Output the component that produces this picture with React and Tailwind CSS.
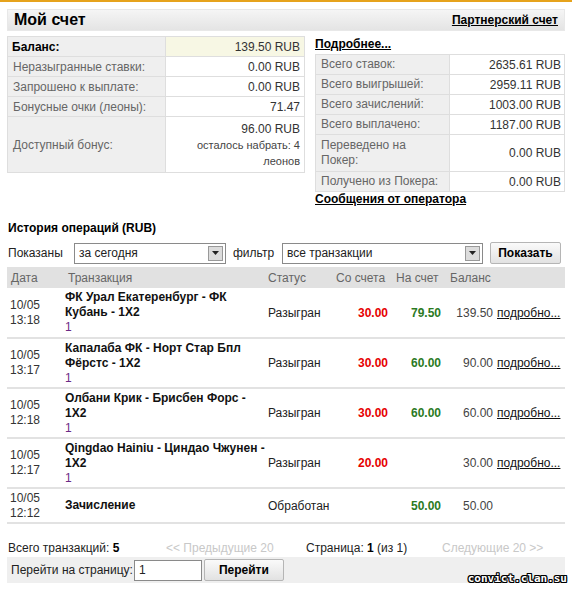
const summary = [
  { label: "Неразыгранные ставки:", value: "0.00 RUB" },
  { label: "Запрошено к выплате:", value: "0.00 RUB" },
  { label: "Бонусные очки (леоны):", value: "71.47" },
];

const totals = [
  { label: "Всего ставок:", value: "2635.61 RUB" },
  { label: "Всего выигрышей:", value: "2959.11 RUB" },
  { label: "Всего зачислений:", value: "1003.00 RUB" },
  { label: "Всего выплачено:", value: "1187.00 RUB" },
  { label: "Переведено на Покер:", value: "0.00 RUB", tall: true },
  { label: "Получено из Покера:", value: "0.00 RUB" },
];

const rows = [
  { date: "10/05", time: "13:18", name: ["ФК Урал Екатеренбург - ФК", "Кубань - 1X2"], sub: "1", status: "Разыгран", out: "30.00", in: "79.50", bal: "139.50", link: true },
  { date: "10/05", time: "13:17", name: ["Капалаба ФК - Норт Стар Бпл", "Фёрстс - 1X2"], sub: "1", status: "Разыгран", out: "30.00", in: "60.00", bal: "90.00", link: true },
  { date: "10/05", time: "12:18", name: ["Олбани Крик - Брисбен Форс -", "1X2"], sub: "1", status: "Разыгран", out: "30.00", in: "60.00", bal: "60.00", link: true },
  { date: "10/05", time: "12:17", name: ["Qingdao Hainiu - Циндао Чжунен -", "1X2"], sub: "1", status: "Разыгран", out: "20.00", in: "", bal: "30.00", link: true },
  { date: "10/05", time: "12:12", name: ["Зачисление"], sub: "", status: "Обработан", out: "", in: "50.00", bal: "50.00", link: false },
];

const SelectBox = ({ value, width }) => (
  <div className={`${width} shrink-0 h-[21px] flex items-center justify-between bg-white border border-[#8a8a8a] pl-[4px] pr-[2px]`}>
    <span>{value}</span>
    <span className="w-[15px] h-[15px] bg-[#dcdcdc] border border-[#999] flex items-center justify-center">
      <svg width="7" height="4" viewBox="0 0 7 4"><path d="M0 0h7L3.5 4z" fill="#222" /></svg>
    </span>
  </div>
);

const App = () => {
  return (
    <div className="w-[572px] h-[591px] bg-white text-[12px] text-[#333] font-['Liberation_Sans',Arial,sans-serif] border-t-2 border-[#e6a31c] relative overflow-hidden">
      <div className="px-[7px] pt-[7px]">
        {/* header */}
        <div className="h-[22px] flex items-center justify-between px-[6px] bg-gradient-to-b from-[#f5f5f5] to-[#e4e4e4] border border-[#e8e8e8]">
          <span className="text-[16px] font-bold text-black">Мой счет</span>
          <a className="font-bold underline text-black">Партнерский счет</a>
        </div>

        <div className="flex gap-[10px] mt-[5px]">
          {/* left summary */}
          <table className="w-[298px] border-collapse self-start">
            <tbody>
              <tr className="h-[20px]">
                <td className="w-[158px] bg-[#efefef] border border-[#dedede] px-[4px] font-bold text-black">Баланс:</td>
                <td className="bg-[#f7f7e4] border border-[#dedede] px-[4px] text-right">139.50 RUB</td>
              </tr>
              {summary.map((r) => (
                <tr key={r.label} className="h-[20px]">
                  <td className="bg-[#efefef] border border-[#dedede] px-[5px] text-[#666]">{r.label}</td>
                  <td className="bg-white border border-[#dedede] px-[4px] text-right">{r.value}</td>
                </tr>
              ))}
              <tr className="h-[56px]">
                <td className="bg-[#efefef] border border-[#dedede] px-[5px] text-[#666]">Доступный бонус:</td>
                <td className="bg-white border border-[#dedede] px-[4px] text-right leading-[16px]">
                  <div>96.00 RUB</div>
                  <div className="text-[11px] text-[#444]">осталось набрать: 4 леонов</div>
                </td>
              </tr>
            </tbody>
          </table>

          {/* right totals */}
          <div className="w-[250px]">
            <a className="block font-bold underline text-black leading-[15px] mt-[1px] mb-[2px]">Подробнее...</a>
            <table className="w-full border-collapse">
              <tbody>
                {totals.map((r) => (
                  <tr key={r.label} className={r.tall ? "h-[37px]" : "h-[20px]"}>
                    <td className="w-[134px] bg-[#efefef] border border-[#dedede] px-[5px] text-[#666] leading-[15px]">{r.label}</td>
                    <td className="bg-white border border-[#dedede] px-[3px] text-right">{r.value}</td>
                  </tr>
                ))}
              </tbody>
            </table>
            <a className="block font-bold underline text-black leading-[14px]">Сообщения от оператора</a>
          </div>
        </div>

        <div className="font-bold text-black mt-[13px] pl-[1px]">История операций (RUB)</div>

        {/* filters */}
        <div className="flex items-center mt-[5px] pl-[1px] text-[#222]">
          <span className="w-[66px] shrink-0">Показаны</span>
          <SelectBox value="за сегодня" width="w-[152px]" />
          <span className="w-[56px] shrink-0 pl-[7px]">фильтр</span>
          <SelectBox value="все транзакции" width="w-[201px]" />
          <button className="ml-[7px] shrink-0 w-[71px] h-[22px] bg-gradient-to-b from-[#fafafa] to-[#e2e2e2] border border-[#b5b5b5] rounded-[2px] font-bold text-black">Показать</button>
        </div>

        {/* transactions */}
        <table className="w-[558px] border-collapse mt-[3px] table-fixed">
          <colgroup>
            <col className="w-[57px]" />
            <col className="w-[200px]" />
            <col className="w-[68px]" />
            <col className="w-[60px]" />
            <col className="w-[54px]" />
            <col className="w-[50px]" />
            <col className="w-[69px]" />
          </colgroup>
          <thead>
            <tr className="h-[21px] bg-[#e1e1e1] text-[#666] text-left">
              <th className="font-normal pl-[4px]">Дата</th>
              <th className="font-normal pl-[4px]">Транзакция</th>
              <th className="font-normal pl-[4px]">Статус</th>
              <th className="font-normal pl-[4px] whitespace-nowrap">Со счета</th>
              <th className="font-normal pl-[4px] whitespace-nowrap">На счет</th>
              <th className="font-normal pl-[4px]">Баланс</th>
              <th></th>
            </tr>
          </thead>
          <tbody>
            {rows.map((r) => (
              <tr key={r.time} className={`border-b-2 border-[#e2e2e2] ${r.sub ? "h-[50px]" : "h-[35px]"}`}>
                <td className="pl-[3px] leading-[15px] text-[#333]">
                  <div>{r.date}</div>
                  <div>{r.time}</div>
                </td>
                <td className="pl-[1px] pr-0 py-0 leading-[15px]">
                  {r.name.map((line) => (
                    <div key={line} className="font-bold text-[#111] whitespace-nowrap">{line}</div>
                  ))}
                  {r.sub && <div className="text-[#6b2a86]">{r.sub}</div>}
                </td>
                <td className="pl-[4px] text-[#222]">{r.status}</td>
                <td className="pr-[4px] text-right font-bold text-[#e60000]">{r.out}</td>
                <td className="pr-[5px] text-right font-bold text-[#2b7a1f]">{r.in}</td>
                <td className="pr-[3px] text-right text-[#444]">{r.bal}</td>
                <td className="pl-[1px] whitespace-nowrap">
                  {r.link && <a className="underline text-[#111]">подробно...</a>}
                </td>
              </tr>
            ))}
          </tbody>
        </table>

        {/* pagination */}
        <div className="flex items-center mt-[17px] pl-[1px] h-[14px]">
          <span className="w-[158px] text-[#222]">Всего транзакций: <b className="text-black">5</b></span>
          <span className="w-[140px] text-[#c8c8c8]">&lt;&lt; Предыдущие 20</span>
          <span className="w-[136px] text-[#222]">Страница: <b className="text-black">1</b> (из 1)</span>
          <span className="text-[#c8c8c8]">Следующие 20 &gt;&gt;</span>
        </div>

        <div className="flex items-center h-[26px] mt-[2px] bg-[#efefef] pl-[4px] text-[#222]">
          <span className="mr-[1px]">Перейти на страницу:</span>
          <div className="w-[68px] h-[21px] bg-white border border-[#8a8a8a] pl-[4px] flex items-center">1</div>
          <button className="ml-[2px] w-[80px] h-[22px] bg-gradient-to-b from-[#fafafa] to-[#e2e2e2] border border-[#b5b5b5] rounded-[2px] font-bold text-black">Перейти</button>
        </div>
      </div>

      {/* watermark */}
      <div className="absolute right-[5px] bottom-[5px] font-['DejaVu_Sans_Mono',monospace] font-bold text-[11px] leading-[14px] text-white [text-shadow:1px_0_0_#000,-1px_0_0_#000,0_1px_0_#000,0_-1px_0_#000,1px_1px_0_#000,-1px_-1px_0_#000,1px_-1px_0_#000,-1px_1px_0_#000]">
        convict.clan.su
      </div>
    </div>
  );
};

export default App;
